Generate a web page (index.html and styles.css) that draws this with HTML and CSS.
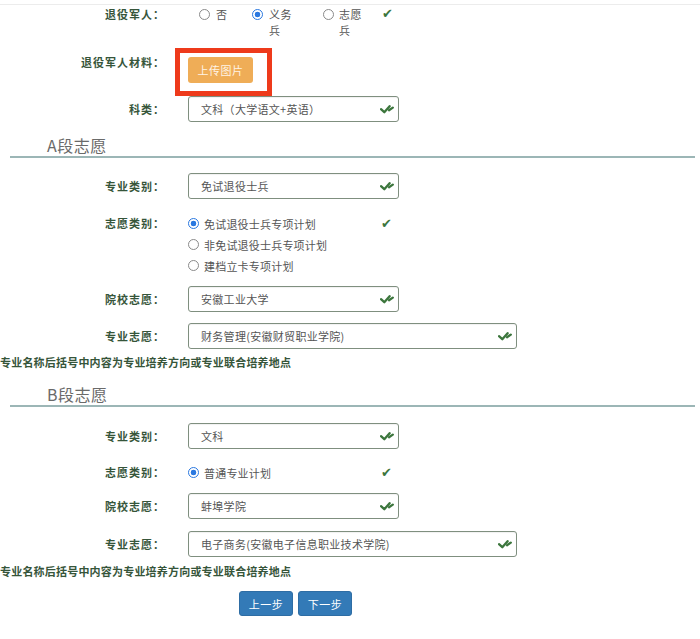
FILE: index.html
```html
<!DOCTYPE html>
<html lang="zh">
<head>
<meta charset="utf-8">
<title>志愿填报</title>
<link rel="stylesheet" href="styles.css">
</head>
<body>
<div class="page">
  <div class="topline"></div>

  <div class="row r1">
    <div class="label">退役军人：</div>
    <div class="ctrl inline-radios">
      <span class="opt o1"><span class="radio"></span><span class="t">否</span></span>
      <span class="opt o2"><span class="radio on"></span><span class="t">义务兵</span></span>
      <span class="opt o3"><span class="radio"></span><span class="t">志愿兵</span></span>
      <span class="ok">✔</span>
    </div>
  </div>

  <div class="row r2">
    <div class="label">退役军人材料：</div>
    <div class="ctrl upload-wrap">
      <span class="upload-box">
        <button class="btn-upload">上传图片</button>
      </span>
    </div>
  </div>

  <div class="row r3">
    <div class="label">科类：</div>
    <div class="select">文科（大学语文+英语）<svg class="dchk" viewBox="0 0 14 10"><path d="M1 5.2 L4.3 8.2 L9.6 2.2" /><path d="M9 6.2 L12.8 3.6" /></svg></div>
  </div>

  <div class="section sa">A段志愿</div>

  <div class="row ra1">
    <div class="label">专业类别：</div>
    <div class="select">免试退役士兵<svg class="dchk" viewBox="0 0 14 10"><path d="M1 5.2 L4.3 8.2 L9.6 2.2" /><path d="M9 6.2 L12.8 3.6" /></svg></div>
  </div>

  <div class="row ra2 list-row">
    <div class="label">志愿类别：</div>
    <div class="ctrl list-radios">
      <div class="list">
        <span class="lopt"><span class="radio on"></span><span class="t">免试退役士兵专项计划</span></span>
        <span class="lopt"><span class="radio"></span><span class="t">非免试退役士兵专项计划</span></span>
        <span class="lopt"><span class="radio"></span><span class="t">建档立卡专项计划</span></span>
      </div>
      <span class="ok">✔</span>
    </div>
  </div>

  <div class="row ra3">
    <div class="label">院校志愿：</div>
    <div class="select">安徽工业大学<svg class="dchk" viewBox="0 0 14 10"><path d="M1 5.2 L4.3 8.2 L9.6 2.2" /><path d="M9 6.2 L12.8 3.6" /></svg></div>
  </div>

  <div class="row ra4">
    <div class="label">专业志愿：</div>
    <div class="select wide">财务管理(安徽财贸职业学院)<svg class="dchk" viewBox="0 0 14 10"><path d="M1 5.2 L4.3 8.2 L9.6 2.2" /><path d="M9 6.2 L12.8 3.6" /></svg></div>
  </div>

  <p class="note na">专业名称后括号中内容为专业培养方向或专业联合培养地点</p>

  <div class="section sb">B段志愿</div>

  <div class="row rb1">
    <div class="label">专业类别：</div>
    <div class="select">文科<svg class="dchk" viewBox="0 0 14 10"><path d="M1 5.2 L4.3 8.2 L9.6 2.2" /><path d="M9 6.2 L12.8 3.6" /></svg></div>
  </div>

  <div class="row rb2 list-row">
    <div class="label">志愿类别：</div>
    <div class="ctrl list-radios">
      <div class="list">
        <span class="lopt"><span class="radio on"></span><span class="t">普通专业计划</span></span>
      </div>
      <span class="ok">✔</span>
    </div>
  </div>

  <div class="row rb3">
    <div class="label">院校志愿：</div>
    <div class="select">蚌埠学院<svg class="dchk" viewBox="0 0 14 10"><path d="M1 5.2 L4.3 8.2 L9.6 2.2" /><path d="M9 6.2 L12.8 3.6" /></svg></div>
  </div>

  <div class="row rb4">
    <div class="label">专业志愿：</div>
    <div class="select wide">电子商务(安徽电子信息职业技术学院)<svg class="dchk" viewBox="0 0 14 10"><path d="M1 5.2 L4.3 8.2 L9.6 2.2" /><path d="M9 6.2 L12.8 3.6" /></svg></div>
  </div>

  <p class="note nb">专业名称后括号中内容为专业培养方向或专业联合培养地点</p>

  <div class="actions">
    <button class="btn-step">上一步</button>
    <button class="btn-step">下一步</button>
  </div>
</div>
</body>
</html>
```

FILE: styles.css
```css
*, *::before, *::after { box-sizing: border-box; margin: 0; padding: 0; }

html, body { background: #fff; }

body {
  width: 700px;
  height: 639px;
  overflow: hidden;
  font-family: "Noto Sans CJK SC", "Liberation Sans", sans-serif;
  font-size: 11px;
  color: #555;
}

.topline {
  height: 5px;
  border-bottom: 1px solid #ececec;
}

.row {
  display: flex;
  align-items: flex-start;
}

.label {
  flex: none;
  width: 165px;
  margin-right: 23px;
  text-align: right;
  font-weight: bold;
  color: #36553a;
  letter-spacing: 1px;
  line-height: 26px;
}

.ok {
  font-family: "DejaVu Sans", sans-serif;
  color: #3c763d;
  font-size: 13px;
  line-height: 16px;
}

/* radio */
.radio {
  flex: none;
  display: inline-block;
  width: 11px;
  height: 11px;
  border: 1px solid #8a8a8a;
  border-radius: 50%;
  background: #fff;
}
.radio.on {
  border: 1.5px solid #2a78e0;
  background: radial-gradient(circle, #2a78e0 0 2.6px, #fff 3.1px);
}

/* row 1 */
.r1 { margin-top: 1px; }
.r1 .label { line-height: 16px; }
.inline-radios {
  width: 211px;
  display: flex;
  align-items: flex-start;
  color: #555;
  line-height: 16px;
}
.opt { display: flex; align-items: flex-start; }
.opt .radio { margin-top: 3px; }
.opt .t { width: 24px; margin-left: 6px; letter-spacing: 0.5px; }
.o1 { margin-left: 11px; width: 53px; }
.o2 { width: 71px; }
.o3 { width: 45px; }
.o3 .t { margin-left: 5px; }
.inline-radios .ok { margin-left: auto; margin-right: 6px; }

/* row 2 upload */
.r2 { margin-top: 16px; }
.r2 .label { line-height: 16px; }
.upload-wrap { padding-top: 3px; }
.upload-box { display: block; position: relative; width: 65px; height: 26px; }
.upload-box::after {
  content: "";
  position: absolute;
  left: -13px;
  top: -9px;
  width: 97px;
  height: 48px;
  border: 5px solid #ee3a1b;
}
.btn-upload {
  display: block;
  width: 65px;
  height: 26px;
  border: none;
  border-radius: 3px;
  background: #efad57;
  color: #fff4e6;
  font-family: "Noto Sans CJK SC", sans-serif;
  font-size: 11px;
  letter-spacing: 0.5px;
}

/* selects */
.select {
  width: 211px;
  height: 26px;
  border: 1px solid #7f8f7f;
  border-radius: 3px;
  padding: 0 4px 0 12px;
  display: flex;
  align-items: center;
  justify-content: space-between;
  color: #555;
  line-height: 24px;
  letter-spacing: 0.3px;
  box-shadow: inset 0 1px 1px rgba(0,0,0,0.06);
}
.select.wide { width: 329px; }
.dchk {
  width: 14px;
  height: 10px;
  fill: none;
  stroke: #3c763d;
  stroke-width: 2.3;
  stroke-linecap: round;
  stroke-linejoin: round;
}

.r3 { margin-top: 13px; }

/* section headings */
.section {
  margin: 12px 5px 0 10px;
  padding-left: 37px;
  font-size: 16px;
  line-height: 22px;
  color: #6a6a6a;
  letter-spacing: 0.5px;
  border-bottom: 2px solid #9cb6b6;
}
.sb { margin-top: 13px; }

.ra1 { margin-top: 15px; }

.list-row .label { line-height: 21px; }
.list-radios {
  width: 211px;
  display: flex;
  align-items: flex-start;
}
.list { display: flex; flex-direction: column; }
.lopt { display: flex; align-items: center; height: 21px; }
.lopt .t { margin-left: 5px; color: #555; letter-spacing: 0.2px; }
.list-radios .ok { margin-left: auto; margin-right: 7px; line-height: 21px; }

.ra2 { margin-top: 14px; }
.ra3 { margin-top: 10px; }
.ra4 { margin-top: 11px; }

.note {
  font-weight: bold;
  color: #36553a;
  line-height: 16px;
  letter-spacing: 0.2px;
}
.na { margin-top: 5px; }

.rb1 { margin-top: 16px; }
.rb2 { margin-top: 13px; }
.rb3 { margin-top: 10px; }
.rb4 { margin-top: 12px; }
.nb { margin-top: 6px; }

.actions {
  margin-top: 12px;
  padding-left: 239px;
  display: flex;
  gap: 5px;
}
.btn-step {
  width: 54px;
  height: 25px;
  border: 1px solid #2e6da4;
  border-radius: 3px;
  background: #337ab7;
  color: #fff;
  font-family: "Noto Sans CJK SC", sans-serif;
  font-size: 11px;
  letter-spacing: 0.5px;
}
```
